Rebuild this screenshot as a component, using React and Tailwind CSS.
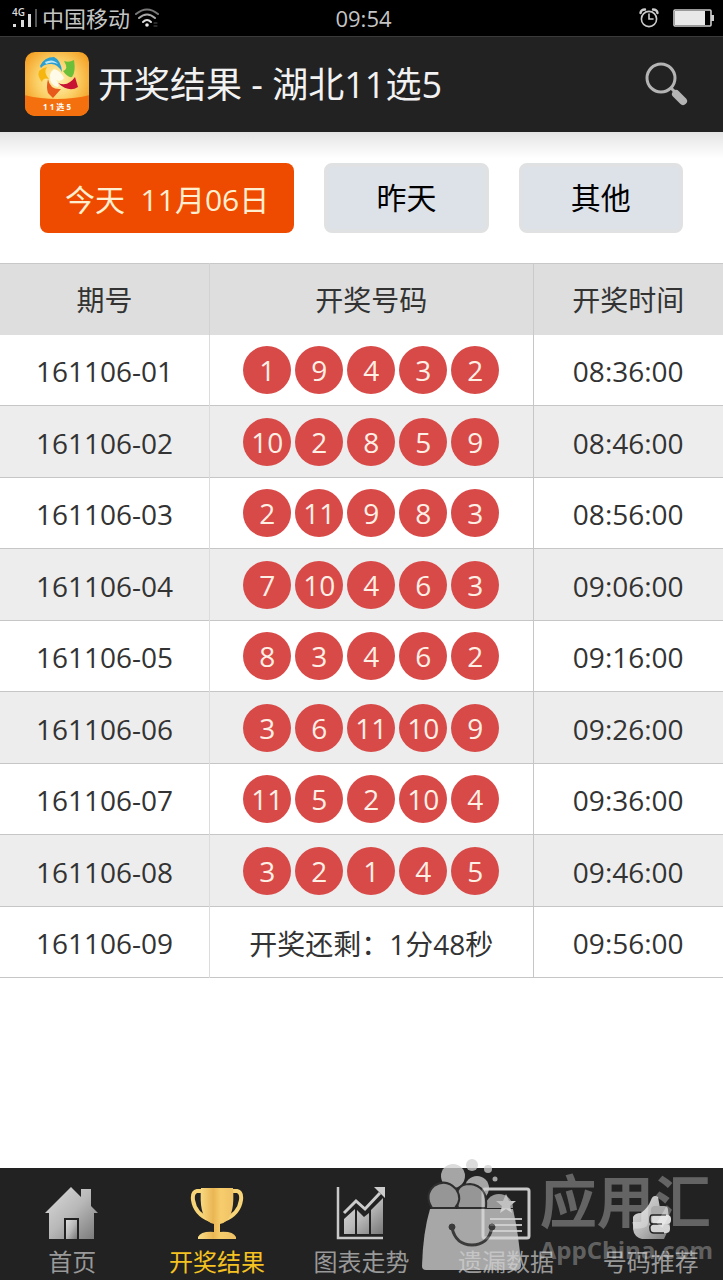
const draws = [
  { issue: "161106-01", balls: [1, 9, 4, 3, 2], time: "08:36:00" },
  { issue: "161106-02", balls: [10, 2, 8, 5, 9], time: "08:46:00" },
  { issue: "161106-03", balls: [2, 11, 9, 8, 3], time: "08:56:00" },
  { issue: "161106-04", balls: [7, 10, 4, 6, 3], time: "09:06:00" },
  { issue: "161106-05", balls: [8, 3, 4, 6, 2], time: "09:16:00" },
  { issue: "161106-06", balls: [3, 6, 11, 10, 9], time: "09:26:00" },
  { issue: "161106-07", balls: [11, 5, 2, 10, 4], time: "09:36:00" },
  { issue: "161106-08", balls: [3, 2, 1, 4, 5], time: "09:46:00" },
  { issue: "161106-09", pending: "开奖还剩：1分48秒", time: "09:56:00" },
];

function StatusBar() {
  return (
    <div className="flex h-9 items-center justify-between bg-black pr-2 pl-3 text-[#c4c4c4]">
      <div className="flex flex-1 items-center">
        <svg width="28" height="26" viewBox="0 0 28 26" className="overflow-visible" aria-label="4G">
          <text x="0" y="11" fontSize="10" fontWeight="600" fill="#ddd">4G</text>
          <rect x="1" y="19" width="3" height="3" fill="#ddd" />
          <rect x="9" y="15" width="3" height="7" fill="#ddd" />
          <rect x="16" y="9" width="3" height="13" fill="#ddd" />
          <rect x="23" y="4" width="2" height="18" fill="#555" />
        </svg>
        <span className="ml-0.5 text-[22px] leading-9">中国移动</span>
        <svg className="ml-1" width="26" height="20" viewBox="0 0 26 20" fill="none" strokeLinecap="round" strokeWidth="2">
          <path d="M2 6Q13-3 24 6" stroke="#777" />
          <path d="M5 10Q13 3 21 10" stroke="#aaa" />
          <path d="M9 14Q13 10 17 14" stroke="#ddd" />
          <circle cx="13" cy="17" r="1.8" fill="#eee" />
          <path d="M20 15h3M20 18h3" stroke="#555" strokeWidth="1" />
        </svg>
      </div>
      <span className="text-[22px] leading-9">09:54</span>
      <div className="flex flex-1 items-center justify-end gap-3.5">
        <svg width="20" height="20" viewBox="0 0 20 20" fill="none" stroke="#ccc" strokeWidth="1.6" strokeLinecap="round">
          <circle cx="10" cy="11" r="7.6" />
          <path d="M10 6v5h4" />
          <path d="M1.5 5Q2 1.5 6 1.5M18.5 5Q18 1.5 14 1.5" strokeWidth="2.4" />
        </svg>
        <svg width="42" height="18" viewBox="0 0 42 18">
          <rect x="1" y="1" width="37" height="16" rx="1" fill="none" stroke="#ccc" strokeWidth="1.6" />
          <rect x="2" y="2" width="30" height="14" fill="#e8e8e8" />
          <rect x="38" y="6" width="3" height="6" fill="#ccc" />
        </svg>
      </div>
    </div>
  );
}

function AppLogo() {
  return (
    <svg width="66" height="66" viewBox="0 0 66 66" className="shrink-0">
      <defs>
        <radialGradient id="logoBg" cx="50%" cy="42%" r="60%">
          <stop offset="0" stopColor="#fff3b8" />
          <stop offset="0.5" stopColor="#fbd168" />
          <stop offset="1" stopColor="#f39a1c" />
        </radialGradient>
        <clipPath id="logoClip">
          <rect x="1" y="0" width="64" height="64" rx="10" />
        </clipPath>
      </defs>
      <g clipPath="url(#logoClip)">
        <rect width="66" height="66" fill="url(#logoBg)" />
        <path d="M0 43Q33 51 66 43V66H0Z" fill="#f4700f" />
        <path d="M16 14Q20 5 30 5Q37 8 38 20Q33 11 26 12Q20 12 17 16Z" fill="#2b9fd2" />
        <path d="M21 10Q29 6 34 12Q28 9 22 12Z" fill="#bfe8f5" />
        <path d="M40 9Q45 11 50 8Q52 20 48 25Q44 26 39 19Q45 17 40 9Z" fill="#6cbf38" />
        <path d="M51 25L54 35Q45 41 34 31Q41 34 46 30Q49 28 51 25Z" fill="#c81432" />
        <path d="M24 27Q26 38 37 37L29 46L24 41Q22 35 24 27Z" fill="#e8591c" />
        <path d="M23 15Q19 20 25 27Q19 25 18 30Q13 24 15 19Q18 16 23 15Z" fill="#f6b50f" />
        <path d="M30 17Q37 19 40 26Q38 30 32 28Q36 33 34 35Q25 33 26 23Q27 19 30 17Z" fill="#fffbe8" />
      </g>
      <text x="33" y="58" textAnchor="middle" fontSize="8" fontWeight="700" fill="#fff" xmlSpace="preserve">1 1 选 5</text>
    </svg>
  );
}

function Header() {
  return (
    <header className="flex h-24 items-center border-t border-[#3a3a3a] bg-[#222] pr-8 pl-6">
      <AppLogo />
      <h1 className="ml-2 flex-1 text-4xl text-[#f2f2f2]">开奖结果 - 湖北11选5</h1>
      <button aria-label="搜索" className="cursor-pointer">
        <svg width="48" height="48" viewBox="0 0 48 48" fill="none" stroke="#b4b4b4">
          <circle cx="18" cy="17" r="14" strokeWidth="3" />
          <path d="M28 27l5 5" strokeWidth="3" />
          <path d="M33 33l7 7" strokeWidth="8" strokeLinecap="round" />
        </svg>
      </button>
    </header>
  );
}

function DayTabs() {
  const plain = "flex-1 cursor-pointer rounded-lg border-4 border-[#e0e1e2] bg-[#dde2e9] text-black";
  return (
    <div className="flex h-[131px] gap-[30px] bg-linear-to-b from-[#e4e4e4] to-white to-20% px-10 pt-[31px] pb-[30px] text-3xl">
      <button className="cursor-pointer rounded-lg bg-[#ef4b00] px-[25px] pt-1 whitespace-pre text-[#ffefd0]">今天  11月06日</button>
      <button className={plain}>昨天</button>
      <button className={plain}>其他</button>
    </div>
  );
}

function Ball({ n }) {
  return (
    <span className="flex size-12 items-center justify-center rounded-full bg-[#d84a48] text-[#fff0e6]">{n}</span>
  );
}

function DrawTable() {
  return (
    <table className="w-full table-fixed border-collapse text-center text-[28px] leading-10 text-[#333]">
      <thead>
        <tr className="h-[71px] border-t border-[#c8c8c8] bg-[#dedede]">
          <th className="w-[29%] border-r border-[#d2d2d2] p-0 pt-0.5 font-normal">期号</th>
          <th className="border-r border-[#cacaca] p-0 pt-0.5 font-normal">开奖号码</th>
          <th className="w-[190px] p-0 pt-0.5 font-normal">开奖时间</th>
        </tr>
      </thead>
      <tbody>
        {draws.map((d) => (
          <tr key={d.issue} className="border-b border-[#c6c6c6] odd:h-[71px] even:h-[72px] even:bg-[#ededed]">
            <td className="border-r border-[#dcdcdc] p-0 pt-0.5">{d.issue}</td>
            <td className="border-r border-[#c6c6c6] p-0">
              {d.balls ? (
                <div className="flex justify-center gap-1">
                  {d.balls.map((n) => <Ball key={n} n={n} />)}
                </div>
              ) : (
                <div className="pt-1">{d.pending}</div>
              )}
            </td>
            <td className="p-0 pt-0.5">{d.time}</td>
          </tr>
        ))}
      </tbody>
    </table>
  );
}

const icons = {
  home: (
    <>
      <path d="M0 27L26 1L36 11V3H46V20L53 27H49V53H34V32H19V53H4V27Z" fill="url(#silver)" />
      <path d="M21 34H32V53H21Z" fill="url(#silver)" />
    </>
  ),
  trophy: (
    <>
      <path d="M12 5H7Q2 6 3 14Q5 28 20 34M42 5H47Q52 6 51 14Q49 28 34 34" fill="none" stroke="#f6d477" strokeWidth="4" />
      <path d="M11 2H43Q45 28 36 35Q33 38 30 38V46Q43 45 46 51V53H8V51Q11 45 24 46V38Q21 38 18 35Q9 28 11 2Z" fill="url(#gold)" />
    </>
  ),
  chart: (
    <>
      <path d="M4 1V52H49" fill="none" stroke="#c9c9c9" strokeWidth="2.5" />
      <path d="M10 33L21 23V48H10ZM23 24L30 31L35 27V48H23ZM37 24L49 12V48H37Z" fill="url(#silver)" />
      <path d="M10 27L22 15L31 23L46 7" fill="none" stroke="#ccc" strokeWidth="3" />
      <path d="M40 1H51V12Z" fill="#ccc" />
    </>
  ),
  data: (
    <>
      <rect x="4" y="3" width="46" height="49" rx="2" fill="none" stroke="#c9c9c9" strokeWidth="3" />
      <path d="M27 8l3 7h7l-6 5 2 7-6-4-6 4 2-7-6-5h7Z" fill="#ccc" />
      <path d="M11 33H43M11 39H43M11 45H43" stroke="#bbb" strokeWidth="2" />
    </>
  ),
  thumb: (
    <>
      <path d="M27 14Q29 8 34 11L36 22L44 24L46 40L40 53H18Q10 51 9 43V31Q11 27 17 27Q24 22 27 14Z" fill="url(#silver)" />
      <rect x="27" y="20" width="17" height="9" rx="4" fill="#aaa" />
      <rect x="28" y="29" width="19" height="9" rx="4" fill="#ddd" />
      <rect x="26" y="38" width="20" height="9" rx="4" fill="#d4d4d4" />
      <path d="M42 29H28Q26 29 26 33V35Q26 38 29 38H38M29 38Q25 39 26 43Q26 47 30 47H40" fill="none" stroke="#222" strokeWidth="1.5" />
    </>
  ),
};

const navItems = [
  { icon: "home", label: "首页" },
  { icon: "trophy", label: "开奖结果", active: true },
  { icon: "chart", label: "图表走势" },
  { icon: "data", label: "遗漏数据" },
  { icon: "thumb", label: "号码推荐" },
];

function BottomNav() {
  return (
    <nav className="flex h-28 bg-[#222] pt-[18px]">
      {navItems.map((item) => (
        <a
          key={item.label}
          href="#"
          className={`flex flex-1 flex-col items-center text-2xl ${item.active ? "text-[#f5c321]" : "text-[#999]"}`}
        >
          <svg width="54" height="54" viewBox="0 0 54 54" className="shrink-0">
            <defs>
              <linearGradient id="silver" x1="0" y1="0" x2="1" y2="1">
                <stop offset="0" stopColor="#ddd" />
                <stop offset="0.5" stopColor="#b8b8b8" />
                <stop offset="1" stopColor="#777" />
              </linearGradient>
              <linearGradient id="gold" x1="0" y1="0" x2="1" y2="0">
                <stop offset="0" stopColor="#fbe08a" />
                <stop offset="0.4" stopColor="#eab654" />
                <stop offset="0.6" stopColor="#f7cd6c" />
                <stop offset="1" stopColor="#eec065" />
              </linearGradient>
            </defs>
            {icons[item.icon]}
          </svg>
          <span className="mt-1.5 leading-8">{item.label}</span>
        </a>
      ))}
    </nav>
  );
}

// store mark laid over the bottom right corner
function StoreMark() {
  return (
    <div className="pointer-events-none absolute right-2.5 bottom-2 flex items-end gap-4">
      <svg width="102" height="114" viewBox="0 0 102 114">
        <g opacity="0.75">
          <g fill="#d1d1d1">
            <circle cx="50" cy="7" r="6" />
            <circle cx="66" cy="11" r="4" />
            <circle cx="73" cy="21" r="2.5" />
            <circle cx="31" cy="18" r="12" />
            <circle cx="55" cy="30" r="12" />
          </g>
          <g fill="#bdbdbd" stroke="#333" strokeWidth="2">
            <path d="M63 50A14 14 0 0 1 91 50Z" stroke="none" />
            <path d="M36 50Q30 26 48 26Q66 28 64 50Z" />
            <path d="M10 50Q2 37 12 28Q24 20 34 31Q41 41 33 50Z" />
          </g>
          <path d="M8 51H91Q97 78 99 107Q99 112 95 112H4Q0 112 0 108Q1 74 8 51Z" fill="#d4d4d4" />
          <g stroke="#444" fill="#444">
            <circle cx="30" cy="69" r="3" />
            <circle cx="70" cy="69" r="3" />
            <path d="M30 70Q34 87 50 87Q66 87 70 70" fill="none" strokeWidth="3" />
          </g>
        </g>
      </svg>
      <div className="text-white/30">
        <div className="text-[57px] leading-[70px] font-bold">应用汇</div>
        <div className="pb-2 text-2xl leading-7 font-bold">AppChina.com</div>
      </div>
    </div>
  );
}

export default function App() {
  return (
    <div className="relative flex min-h-screen flex-col bg-white font-['Open_Sans','Noto_Sans_CJK_SC',sans-serif]">
      <StatusBar />
      <Header />
      <main className="flex-1">
        <DayTabs />
        <DrawTable />
      </main>
      <BottomNav />
      <StoreMark />
    </div>
  );
}
